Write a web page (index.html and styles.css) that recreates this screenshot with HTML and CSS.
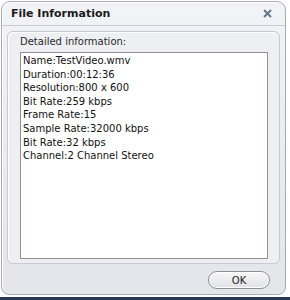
FILE: index.html
```html
<!DOCTYPE html>
<html lang="en">

<head>
    <meta charset="UTF-8">
    <title>File Information</title>
    <link rel="stylesheet" href="styles.css">
</head>

<body>
    <div class="dialog">
        <div class="titlebar">
            <span class="title">File Information</span>
            <svg class="close" width="9" height="9" viewBox="0 0 9 9">
                <path d="M1 1 L8 8 M8 1 L1 8" stroke="#5f7888" stroke-width="1.8" fill="none" />
            </svg>
        </div>

        <div class="content">
            <div class="group">
                <div class="group-label">Detailed information:</div>
                <div class="info-box">
                    <div>Name:TestVideo.wmv</div>
                    <div>Duration:00:12:36</div>
                    <div>Resolution:800 x 600</div>
                    <div>Bit Rate:259 kbps</div>
                    <div>Frame Rate:15</div>
                    <div>Sample Rate:32000 kbps</div>
                    <div>Bit Rate:32 kbps</div>
                    <div>Channel:2 Channel Stereo</div>
                </div>
            </div>

            <div class="buttons">
                <button class="ok">OK</button>
            </div>
        </div>
    </div>
    <div class="taskbar"></div>
</body>

</html>
```

FILE: styles.css
```css
body {
    margin: 0;
    padding: 0;
    width: 290px;
    height: 300px;
    background-color: #ffffff;
    font-family: Tahoma, "DejaVu Sans", sans-serif;
    overflow: hidden;
}

.dialog {
    margin: 1px 0 0 1px;
    width: 285px;
    height: 294px;
    border: 1px solid #a9abb1;
    border-radius: 9px 9px 8px 8px;
    background: linear-gradient(#f2f3f6, #e4e5ea);
    box-shadow: inset 1px 1px 0 #ffffff;
    box-sizing: border-box;
    display: flex;
    flex-direction: column;
}

.titlebar {
    height: 23px;
    display: flex;
    align-items: center;
    justify-content: space-between;
    padding: 0 13px 0 9px;
    border-bottom: 1px solid #c9cbd0;
}

.title {
    font-family: "DejaVu Sans", sans-serif;
    font-weight: bold;
    font-size: 11px;
    color: #1b1b1b;
}

.content {
    flex: 1;
    padding: 5px 5px 0 5px;
    display: flex;
    flex-direction: column;
}

.group {
    height: 233px;
    border: 1px solid #c8cad0;
    border-radius: 6px;
    background: #eeeff2;
    box-shadow: inset 1px 1px 0 #ffffff;
    padding: 3px 11px 0 12px;
    box-sizing: border-box;
}

.group-label {
    font-size: 10px;
    color: #2a2a2a;
    height: 14px;
    line-height: 14px;
    margin-bottom: 3px;
}

.info-box {
    height: 207px;
    background: #ffffff;
    border: 1px solid #8f8f8f;
    box-sizing: border-box;
    padding: 1px 2px;
    font-size: 10px;
    line-height: 13.6px;
    color: #111111;
}

.buttons {
    display: flex;
    justify-content: flex-end;
    padding: 7px 10px 0 0;
}

.ok {
    width: 62px;
    height: 18px;
    border: 1px solid #8d8f94;
    border-radius: 9px;
    background: linear-gradient(#f7f7f8, #e1e2e5);
    box-shadow: inset 0 0 0 1px #ffffff;
    font-family: Tahoma, "DejaVu Sans", sans-serif;
    font-size: 10px;
    color: #222222;
    padding: 0;
}

.taskbar {
    margin-top: 2px;
    height: 3px;
    background: #27384d;
}
```
